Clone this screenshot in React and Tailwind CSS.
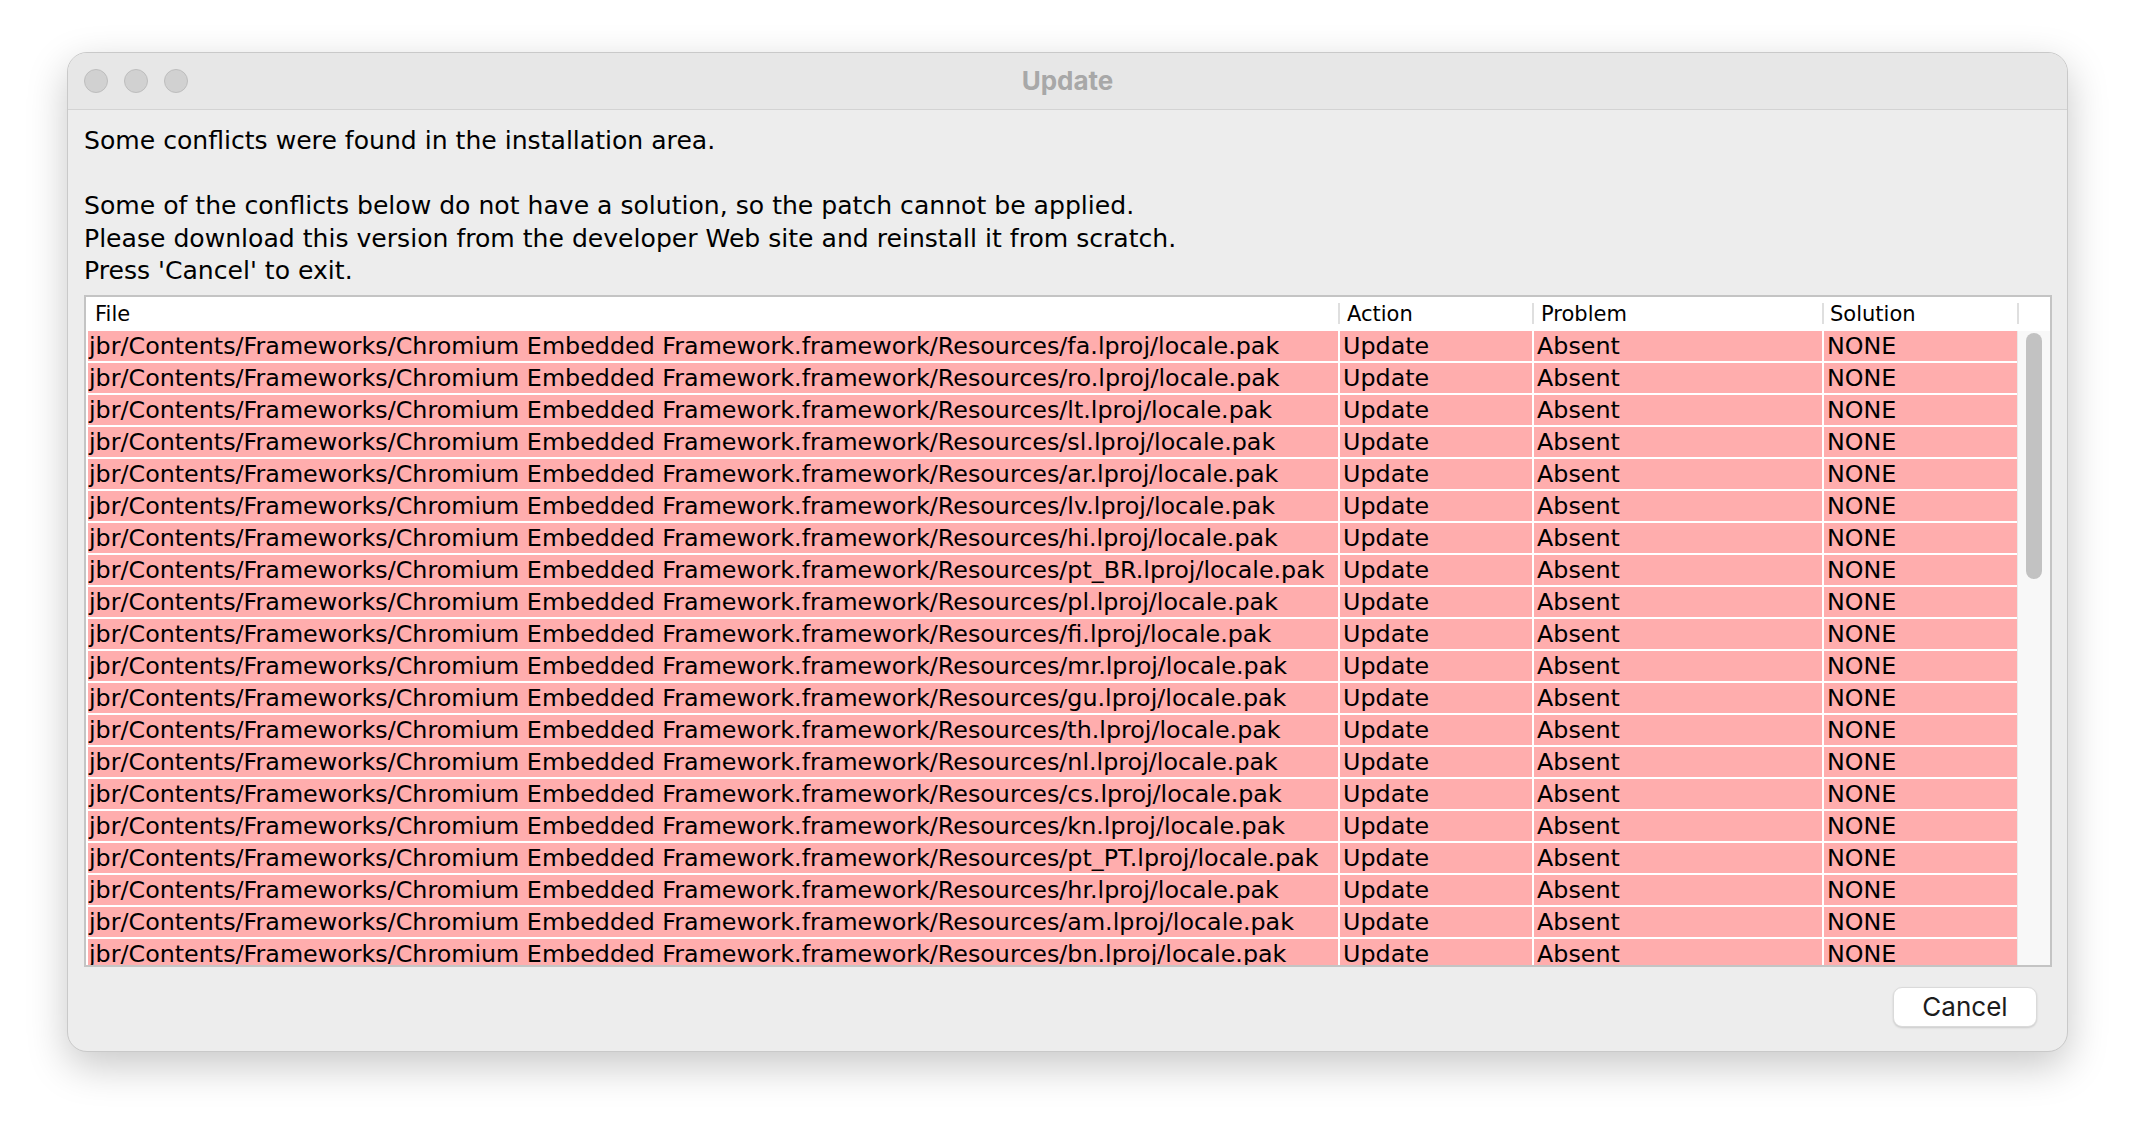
import React from "react";

const locales = [
  "fa", "ro", "lt", "sl", "ar", "lv", "hi", "pt_BR", "pl", "fi",
  "mr", "gu", "th", "nl", "cs", "kn", "pt_PT", "hr", "am", "bn",
  "ta", "de", "en", "es", "fr", "it", "ja", "ko", "ru", "sv",
  "tr", "uk", "vi", "zh_CN", "zh_TW", "he", "hu", "id", "ms", "nb",
  "sk", "sr", "sw", "te", "ml", "et", "el", "da", "ca", "bg", "es_419",
];

const rows = locales.map((l) => ({
  file: `jbr/Contents/Frameworks/Chromium Embedded Framework.framework/Resources/${l}.lproj/locale.pak`,
  action: "Update",
  problem: "Absent",
  solution: "NONE",
}));

function TrafficLight() {
  return <div className="w-[24px] h-[24px] rounded-full bg-[#d1d1d1] border border-[#bdbdbd]" />;
}

function HeaderSep() {
  return <div className="w-[2px] h-[21px] bg-[#dfdfdf] shrink-0" />;
}

export default function App() {
  return (
    <div className="min-h-screen w-full bg-white pt-[52px] pl-[67px]">
      <div className="w-[2001px] h-[1000px] rounded-[20px] bg-[#ededed] border border-[#c9c9c9] shadow-[0_14px_40px_rgba(0,0,0,0.22)] overflow-hidden flex flex-col">

        {/* title bar */}
        <div className="h-[57px] shrink-0 bg-[#e7e7e7] border-b border-[#d3d3d3] grid grid-cols-[1fr_auto_1fr] items-center">
          <div className="flex items-center gap-[16px] pl-[16px]">
            <TrafficLight />
            <TrafficLight />
            <TrafficLight />
          </div>
          <div className="font-['Inter',sans-serif] font-bold text-[26px] text-[#a8a8a8] leading-none">
            Update
          </div>
          <div />
        </div>

        {/* message */}
        <div className="pl-[16px] pr-[16px] pt-[15px] font-['DejaVu_Sans',sans-serif] text-black">
          <div className="text-[25.1px] leading-[32.5px]">
            <p>Some conflicts were found in the installation area.</p>
            <p>&nbsp;</p>
            <p>Some of the conflicts below do not have a solution, so the patch cannot be applied.</p>
            <p>Please download this version from the developer Web site and reinstall it from scratch.</p>
            <p>Press 'Cancel' to exit.</p>
          </div>

          {/* conflicts table */}
          <div className="mt-[7px] w-[1968px] h-[672px] border-2 border-[#c4c4c4] bg-white flex flex-col">
            <div className="h-[34px] shrink-0 flex items-center bg-white text-[21px] leading-[34px]">
              <div className="w-[1252px] pl-[9px] shrink-0">File</div>
              <HeaderSep />
              <div className="w-[192px] pl-[7px] shrink-0">Action</div>
              <HeaderSep />
              <div className="w-[288px] pl-[7px] shrink-0">Problem</div>
              <HeaderSep />
              <div className="w-[193px] pl-[6px] shrink-0">Solution</div>
              <HeaderSep />
            </div>

            <div className="flex flex-1 min-h-0">
              <div className="w-[1931px] pl-[2px] overflow-hidden text-[23.8px]">
                {rows.map((r, i) => (
                  <div key={i} className="grid grid-cols-[1250px_192px_288px_193px] gap-x-[2px] h-[32px] pb-[2px]">
                    <div className="bg-[#ffadad] pl-[1px] pt-[1px] leading-[29px] whitespace-nowrap overflow-hidden">{r.file}</div>
                    <div className="bg-[#ffadad] pl-[3px] pt-[1px] leading-[29px]">{r.action}</div>
                    <div className="bg-[#ffadad] pl-[3px] pt-[1px] leading-[29px]">{r.problem}</div>
                    <div className="bg-[#ffadad] pl-[3px] pt-[1px] leading-[29px]">{r.solution}</div>
                  </div>
                ))}
              </div>
              <div className="w-[33px] bg-[#f8f8f8] border-l border-[#e9e9e9] pl-[8px] pt-[2px]">
                <div className="w-[16px] h-[246px] rounded-full bg-[#c2c2c2]" />
              </div>
            </div>
          </div>
        </div>

        {/* buttons */}
        <div className="flex-1 flex justify-end items-start pt-[20px] pr-[30px]">
          <button className="w-[144px] h-[40px] rounded-[9px] bg-white border border-[#dadada] shadow-[0_1px_2px_rgba(0,0,0,0.15)] font-['Inter',sans-serif] text-[26px] text-[#1c1c1c] leading-none">
            Cancel
          </button>
        </div>
      </div>
    </div>
  );
}
